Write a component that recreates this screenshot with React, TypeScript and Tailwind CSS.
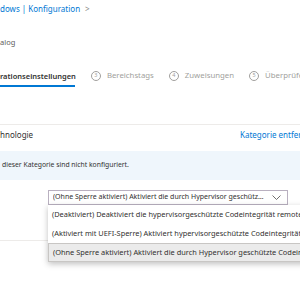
import React from 'react';

const STEPS = [
  { n: 3, label: 'Bereichstags' },
  { n: 4, label: 'Zuweisungen' },
  { n: 5, label: 'Überprüfen + erstellen' },
];

const OPTIONS = [
  '(Deaktiviert) Deaktiviert die hypervisorgeschützte Codeintegrität remote',
  '(Aktiviert mit UEFI-Sperre) Aktiviert hypervisorgeschützte Codeintegrität',
  '(Ohne Sperre aktiviert) Aktiviert die durch Hypervisor geschützte Codeintegrität',
];

function StepCircle({ n }: { n: number }) {
  return (
    <span className="flex h-[10px] w-[10px] shrink-0 items-center justify-center rounded-full border border-[#a19f9d] text-[5.5px] leading-none text-[#a19f9d]">
      {n}
    </span>
  );
}

function Chevron() {
  return (
    <svg width="9" height="5" viewBox="0 0 9 5" fill="none" aria-hidden>
      <path d="M0.5 0.5l4 4 4-4" stroke="#605e5c" strokeWidth="0.9" />
    </svg>
  );
}

export default function App() {
  return (
    <div
      className="relative h-[300px] w-[300px] overflow-hidden bg-white text-[#323130]"
      style={{ fontFamily: '"Noto Sans", "Open Sans", sans-serif' }}
    >
      {/* breadcrumb */}
      <div className="flex h-[17px] items-center gap-[5px] whitespace-nowrap text-[8px] text-[#0078d4]">
        <span>dows | Konfiguration</span>
        <span className="text-[#8a8886]">&gt;</span>
      </div>

      <div className="mt-[18px] flex h-[16px] items-center text-[7.5px] text-[#605e5c]">alog</div>

      {/* tabs */}
      <div className="mt-[17px] flex h-[19px] items-start whitespace-nowrap">
        <div className="flex shrink-0 flex-col">
          <span className="h-[16px] text-[7.5px] font-semibold leading-[16px]">rationseinstellungen</span>
          <span className="mt-[1px] h-[2px] w-[75px] bg-[#0078d4]" />
        </div>
        {STEPS.map((s) => (
          <div key={s.n} className="ml-[15px] flex h-[16px] shrink-0 items-center gap-[6px] text-[7.8px] text-[#a19f9d]">
            <StepCircle n={s.n} />
            <span>{s.label}</span>
          </div>
        ))}
      </div>

      <div className="mt-[37px] h-px w-full bg-[#edebe9]" />

      {/* section header */}
      <div className="flex h-[20px] items-center whitespace-nowrap text-[8px]">
        <span className="w-[240px] shrink-0">hnologie</span>
        <span className="shrink-0 text-[#0078d4]">Kategorie entfernen</span>
      </div>

      {/* info banner */}
      <div className="mt-[6px] flex h-[29px] items-center bg-[#eff6fc] pl-[2px] text-[6.8px]">
        dieser Kategorie sind nicht konfiguriert.
      </div>

      {/* select */}
      <div className="relative mt-[10px] ml-[48px] w-[240px]">
        <div className="flex h-[15px] items-center justify-between whitespace-nowrap border border-[#b9b0c0] pl-[4px] pr-[6px] text-[7px]">
          <span className="overflow-hidden text-ellipsis">(Ohne Sperre aktiviert) Aktiviert die durch Hypervisor geschützte Codeintegrität</span>
          <span className="ml-[6px] flex shrink-0">
            <Chevron />
          </span>
        </div>

        <div className="absolute left-0 top-[15px] z-10 w-[290px] bg-white shadow-[0_2px_6px_rgba(0,0,0,0.25)]">
          {OPTIONS.map((o, i) => (
            <div
              key={o}
              className={`flex h-[19px] items-center whitespace-nowrap pl-[4px] text-[7.4px] ${
                i === 2 ? 'border border-[#c8c6c4] bg-[#ebebeb]' : ''
              }`}
            >
              {o}
            </div>
          ))}
        </div>
      </div>

      <div className="mt-[35px] h-px w-[48px] bg-[#edebe9]" />
    </div>
  );
}
